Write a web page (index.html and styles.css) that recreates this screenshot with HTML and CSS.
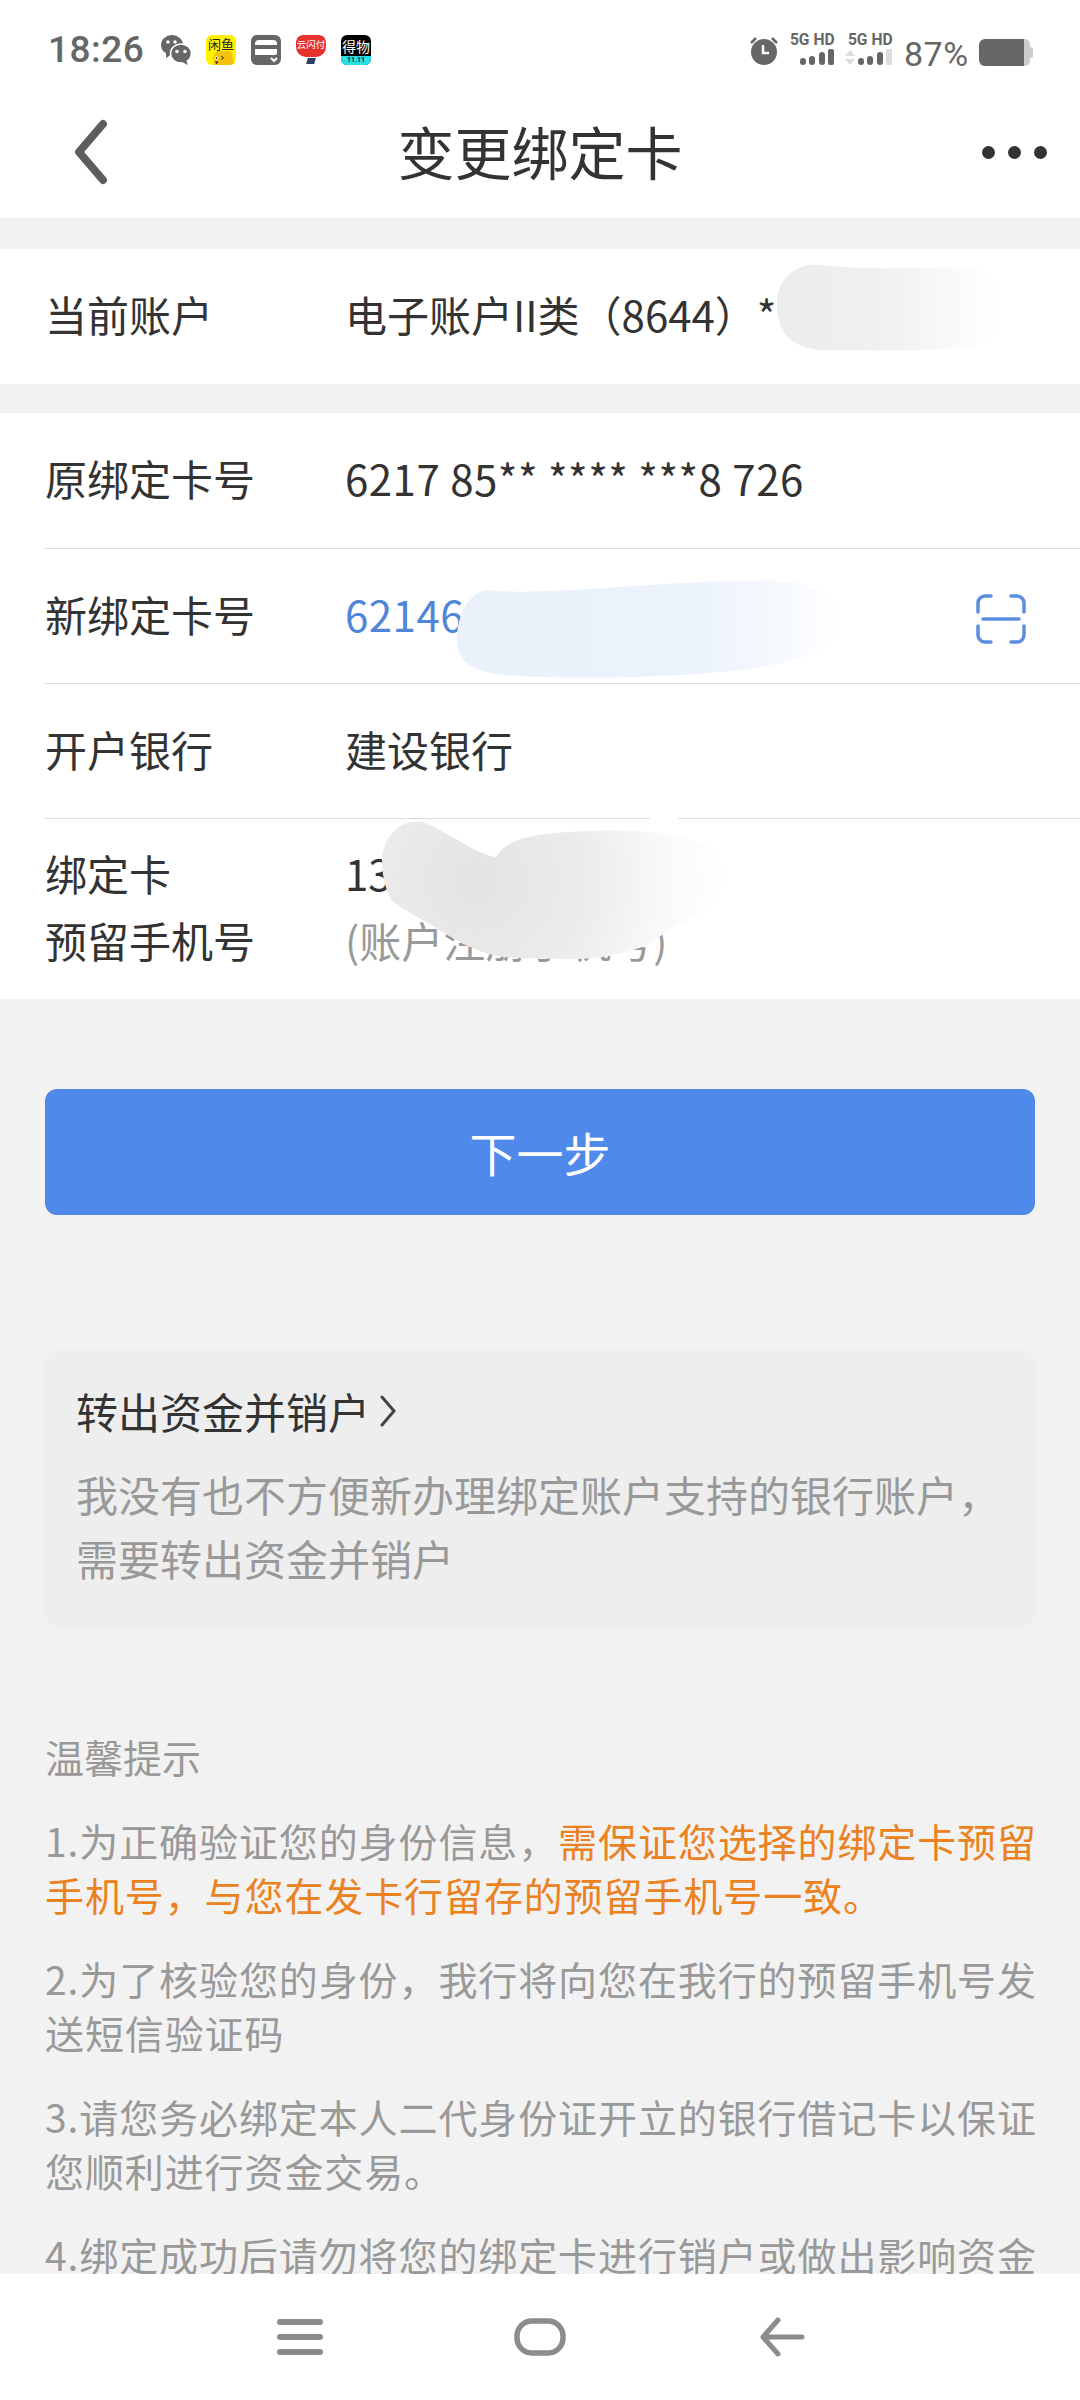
FILE: index.html
```html
<!DOCTYPE html>
<html lang="zh-CN">
<head>
<meta charset="utf-8">
<title>变更绑定卡</title>
<link rel="stylesheet" href="styles.css">
</head>
<body>
<div class="page">
  <header class="top">
    <div class="status">
      <div class="status-left">
        <span class="time">18:26</span>
        <svg class="ic wechat" viewBox="0 0 30 30"><ellipse cx="11" cy="10" rx="11" ry="10" fill="#666"/><path d="M5 17l0 6 6-4z" fill="#666"/><ellipse cx="20" cy="18.500" rx="10.500" ry="9.500" fill="#666" stroke="#fff" stroke-width="1.500"/><path d="M25 25l2 5-6-3z" fill="#666"/><circle cx="7" cy="7" r="1.800" fill="#fff"/><circle cx="14" cy="7" r="1.800" fill="#fff"/><circle cx="16" cy="16.500" r="1.800" fill="#fff"/><circle cx="24" cy="16.500" r="1.800" fill="#fff"/></svg>
        <span class="app app-yellow"><span class="app-cn">闲鱼</span><svg class="app-art" viewBox="0 0 30 16"><path d="M8 16a11 11 0 0 1 20-13l2 13z" fill="#f4c20d"/><circle cx="10" cy="8" r="2" fill="#fff"/><circle cx="10" cy="8" r="1" fill="#222"/><path d="M15 6l3 2-3 2" stroke="#222" stroke-width="1" fill="none"/><path d="M8 12h4l-2 3z" fill="#222"/></svg></span>
        <svg class="ic" viewBox="0 0 30 30"><rect width="30" height="30" rx="6" fill="#666"/><path d="M4 10v-1a4 4 0 0 1 4-4h14a4 4 0 0 1 4 4v1z" fill="#fff"/><path d="M4 14h22v4a2 2 0 0 1-2 2H4z" fill="#fff"/><path d="M20 23l3 3 3-3" fill="none" stroke="#fff" stroke-width="2"/></svg>
        <span class="app app-red"><span class="app-red-top"><span class="app-cn">云闪付</span></span><span class="app-red-mark"></span></span>
        <span class="app app-black"><span class="app-cn">得物</span><span class="app-tag">11.11</span></span>
      </div>
      <div class="status-right">
        <svg class="ic alarm" viewBox="0 0 28 30"><circle cx="14" cy="17" r="13" fill="#666"/><path d="M1 8l5-5M27 8l-5-5" stroke="#666" stroke-width="2.500"/><path d="M13 10v8h6" fill="none" stroke="#fff" stroke-width="2.500"/></svg>
        <div class="signal">
          <span class="sim-label">5G HD</span>
          <svg class="bars" viewBox="0 0 48 16"><rect x="13" y="9" width="6" height="7" rx="3" fill="#666"/><rect x="22" y="7" width="6" height="9" rx="3" fill="#666"/><rect x="32" y="3" width="6" height="13" rx="3" fill="#666"/><rect x="41" y="0" width="6" height="16" rx="2" fill="#666"/></svg>
        </div>
        <div class="signal">
          <span class="sim-label">5G HD</span>
          <svg class="bars" viewBox="0 0 48 16"><path d="M0 7l5-6 5 6zM0 10h10l-5 6z" fill="#ddd"/><rect x="13" y="9" width="6" height="7" rx="3" fill="#666"/><rect x="22" y="7" width="6" height="9" rx="3" fill="#666"/><rect x="32" y="3" width="6" height="13" rx="3" fill="#666"/><rect x="41" y="0" width="6" height="16" rx="1" fill="#ddd"/></svg>
        </div>
        <span class="battery-pct">87%</span>
        <svg class="battery" viewBox="0 0 54 27"><path d="M44 0h2a5 5 0 0 1 5 5v3a5 5 0 0 1 0 11v3a5 5 0 0 1-5 5h-2z" fill="#ccc"/><path d="M6 0h39v27H6a6 6 0 0 1-6-6V6a6 6 0 0 1 6-6z" fill="#666"/></svg>
      </div>
    </div>
    <div class="titlebar">
      <svg class="back" viewBox="0 0 34 66"><path d="M29 5L5 33l24 28" fill="none" stroke="#5d5d5d" stroke-width="8" stroke-linecap="round" stroke-linejoin="round"/></svg>
      <h1 class="title">变更绑定卡</h1>
      <div class="more"><i></i><i></i><i></i></div>
    </div>
  </header>

  <main class="content">
    <section class="group">
      <div class="row">
        <span class="label">当前账户</span>
        <span class="value">电子账户II类（8644）*</span>
        <svg class="mask mask-account" viewBox="0 0 230 90"><defs><linearGradient id="g1"><stop offset="0" stop-color="#ececec"/><stop offset=".45" stop-color="#f0f0f0"/><stop offset=".85" stop-color="#fbfbfb"/><stop offset="1" stop-color="#fff"/></linearGradient></defs><path d="M2 45C0 15 25 0 45 3c50 6 120 0 160 5 25 10 25 60 10 72-50 12-120 8-170 8C15 85 3 70 2 45z" fill="url(#g1)"/></svg>
      </div>
    </section>

    <section class="group">
      <div class="row">
        <span class="label">原绑定卡号</span>
        <span class="value value-num">6217 85** **** ***8 726</span>
      </div>
      <div class="row">
        <span class="label">新绑定卡号</span>
        <span class="value value-num value-link">62146</span>
        <svg class="scan" viewBox="0 0 50 50"><path d="M2 18V9a7 7 0 0 1 7-7h6M35 2h6a7 7 0 0 1 7 7v9M2 32v9a7 7 0 0 0 7 7h6M35 48h6a7 7 0 0 0 7-7v-9M7 25h36" fill="none" stroke="#5b8de0" stroke-width="3.500" stroke-linecap="round"/></svg>
        <svg class="mask mask-card" viewBox="0 0 385 97"><defs><linearGradient id="g2"><stop offset="0" stop-color="#eaf1fa"/><stop offset=".6" stop-color="#ebf2fb"/><stop offset=".9" stop-color="#f9fbfe"/><stop offset="1" stop-color="#fff"/></linearGradient></defs><path d="M2 55C4 25 20 5 40 10c70 4 180-12 280-10 40 2 65 10 65 40 0 30-40 40-90 48-70 8-150 10-205 8C30 95 0 90 2 55z" fill="url(#g2)"/></svg>
      </div>
      <div class="row">
        <span class="label">开户银行</span>
        <span class="value">建设银行</span>
      </div>
      <div class="row row-phone">
        <span class="label label-stack">绑定卡<br>预留手机号</span>
        <span class="value value-stack">13<br><span class="hint">(账户注册手机号)</span></span>
        <svg class="mask mask-phone" viewBox="0 0 350 140"><defs><radialGradient id="g3" gradientUnits="userSpaceOnUse" cx="95" cy="62" r="250"><stop offset="0" stop-color="#e3e3e3"/><stop offset=".45" stop-color="#ececec"/><stop offset=".75" stop-color="#f9f9f9"/><stop offset="1" stop-color="#fff"/></radialGradient></defs><rect x="268" y="-3" width="28" height="6" fill="#fff"/><path d="M0 42C0 15 25-6 48 6c25 12 48 30 66 32 12-22 50-24 92-26 50-2 130 0 140 40C351 87 296 102 272 122C250 135 215 140 190 140C150 140 125 140 107 135C85 128 75 122 59 112C40 100 20 90 10 82C3 70 0 55 0 42Z" fill="url(#g3)"/></svg>
      </div>
    </section>

    <button class="next" type="button">下一步</button>

    <section class="close-card">
      <div class="close-title">转出资金并销户<svg class="close-arrow" viewBox="0 0 16 32"><path d="M2 2l12 14L2 30" fill="none" stroke="#444" stroke-width="3" stroke-linecap="round"/></svg></div>
      <p class="close-desc">我没有也不方便新办理绑定账户支持的银行账户，<br>需要转出资金并销户</p>
    </section>

    <section class="tips">
      <h2 class="tips-title">温馨提示</h2>
      <p>1.为正确验证您的身份信息，<em>需保证您选择的绑定卡预留手机号，与您在发卡行留存的预留手机号一致。</em></p>
      <p>2.为了核验您的身份，我行将向您在我行的预留手机号发送短信验证码</p>
      <p>3.请您务必绑定本人二代身份证开立的银行借记卡以保证您顺利进行资金交易。</p>
      <p>4.绑定成功后请勿将您的绑定卡进行销户或做出影响资金</p>
    </section>
  </main>

  <nav class="navbar">
    <svg class="nav-menu" viewBox="0 0 46 36"><path d="M3 3h40M3 18h40M3 33h40" stroke="#8c8c8c" stroke-width="6" stroke-linecap="round"/></svg>
    <svg class="nav-home" viewBox="0 0 52 38"><rect x="3" y="3" width="46" height="32" rx="15" fill="none" stroke="#8c8c8c" stroke-width="5.500"/></svg>
    <svg class="nav-back" viewBox="0 0 46 40"><path d="M19 3L4 20l15 17M4 20h39" fill="none" stroke="#8c8c8c" stroke-width="5" stroke-linecap="round" stroke-linejoin="round"/></svg>
  </nav>
</div>
</body>
</html>
```

FILE: styles.css
```css
* { box-sizing: border-box; }
html, body { margin: 0; padding: 0; }
body { background: #f2f2f2; font-family: "Noto Sans CJK SC", "Noto Sans", sans-serif; color: #333; }

.page { width: 1080px; height: 2400px; display: flex; flex-direction: column; overflow: hidden; }

.top { height: 219px; flex: none; background: #fff; border-bottom: 1px solid #ececec; display: flex; flex-direction: column; }
.status { height: 100px; flex: none; padding: 34px 47px 0 48px; display: flex; justify-content: space-between; align-items: flex-start; }
.status-left { display: flex; align-items: center; height: 32px; }
.status-right { display: flex; align-items: center; height: 32px; }
.time { font-family: Roboto, sans-serif; font-weight: 500; font-size: 37px; line-height: 32px; color: #666; width: 113px; letter-spacing: .5px; }
.ic { width: 30px; height: 30px; flex: none; margin-right: 15px; }
.wechat { margin-right: 15px; }
.app { width: 30px; height: 30px; flex: none; margin-right: 15px; border-radius: 6px; display: flex; flex-direction: column; align-items: center; overflow: hidden; position: relative; }
.app:last-child { margin-right: 0; }
.app-cn { font-size: 13px; line-height: 15px; white-space: nowrap; }
.app-yellow { background: #fff200; color: #222; padding-top: 1px; }
.app-art { width: 30px; height: 14px; }
.app-red { background: transparent; }
.app-red-top { width: 30px; height: 22px; background: #e5322d; border-radius: 7px 7px 10px 10px; color: #fff; display: flex; justify-content: center; padding-top: 2px; }
.app-red-top .app-cn { font-size: 9.500px; }
.app-red-mark { width: 8px; height: 6px; margin-top: 1px; background: #2c3e63; transform: skewX(-15deg); }
.app-black { background: #000; color: #fff; padding-top: 2px; }
.app-black .app-cn { font-size: 14px; line-height: 18px; }
.app-tag { position: absolute; left: 0; right: 0; bottom: 0; height: 9px; background: #2adfe6; color: #123; font-size: 7px; line-height: 9px; text-align: center; font-family: Roboto, sans-serif; font-weight: 700; }

.alarm { width: 28px; margin-right: 9px; }
.signal { width: 48px; margin-right: 10px; display: flex; flex-direction: column; align-items: flex-end; }
.sim-label { font-family: Roboto, sans-serif; font-weight: 700; font-size: 17px; line-height: 15px; color: #666; white-space: nowrap; transform: scaleX(.92); transform-origin: right; margin-top: -3px; }
.bars { width: 48px; height: 16px; margin-top: 2px; flex: none; }
.battery-pct { font-family: Roboto, sans-serif; font-size: 34px; line-height: 32px; color: #666; width: 75px; margin-left: 1px; margin-top: 7px; letter-spacing: .5px; }
.battery { width: 54px; height: 27px; flex: none; margin-top: 4px; }

.titlebar { flex: 1; position: relative; display: flex; align-items: center; justify-content: space-between; padding: 0 33px 14px 74px; }
.back { width: 34px; height: 66px; flex: none; }
.title { position: absolute; left: 0; right: 0; top: 11px; margin: 0; text-align: center; font-size: 57px; line-height: 78px; font-weight: 400; color: #333; }
.more { display: flex; gap: 13px; }
.more i { display: block; width: 13px; height: 13px; border-radius: 50%; background: #333; }

.content { flex: 1; min-height: 0; overflow: hidden; padding-top: 30px; }

.group { background: #fff; padding-left: 45px; margin-bottom: 29px; }
.row { position: relative; height: 135px; display: flex; align-items: center; padding-bottom: 6px; border-top: 1px solid #dedede; }
.group > .row:first-child { border-top: 0; }
.label { width: 300px; flex: none; font-size: 42px; line-height: 67px; color: #333; }
.value { font-size: 42px; line-height: 67px; color: #333; white-space: nowrap; }
.value-num { letter-spacing: .5px; }
.value-link { color: #4f86d9; }
.label-stack, .value-stack { white-space: nowrap; }
.row-phone { height: 181px; }
.hint { color: #999; }
.scan { position: absolute; right: 54px; top: 45px; width: 50px; height: 50px; }

.mask { position: absolute; overflow: visible; }
.mask-account { left: 730px; top: 13px; width: 230px; height: 90px; }
.mask-card { left: 410px; top: 32px; width: 385px; height: 97px; }
.mask-phone { left: 337px; top: 0; width: 350px; height: 140px; }

.next { display: block; width: 990px; height: 126px; margin: 90px 45px 0; padding: 0; border: 0; border-radius: 12px; background: #4f8aeb; color: #fff; font: 400 47px/122px "Noto Sans CJK SC", sans-serif; }

.close-card { margin: 135px 45px 0; height: 277px; padding: 29px 31px 0; background: #eeeeee; border-radius: 14px; }
.close-title { display: flex; align-items: center; font-size: 42px; line-height: 64px; color: #333; }
.close-arrow { width: 16px; height: 32px; margin-left: 10px; }
.close-desc { margin: 19px 0 0; font-size: 42px; line-height: 64px; color: #999; white-space: nowrap; }

.tips { margin: 0 45px; padding-top: 102px; color: #999; font-size: 39px; line-height: 54.500px; letter-spacing: .9px; }
.tips-title { margin: 0 0 29px; font-size: 39px; line-height: 54.500px; font-weight: 400; letter-spacing: 0; }
.tips p { margin: 0 -6px 29px 0; }
.tips em { font-style: normal; color: #ec8120; }

.navbar { height: 126px; flex: none; background: #fff; position: relative; display: flex; }
.nav-menu { position: absolute; left: 277px; top: 45px; width: 46px; height: 36px; }
.nav-home { position: absolute; left: 514px; top: 44px; width: 52px; height: 38px; }
.nav-back { position: absolute; left: 759px; top: 43px; width: 46px; height: 40px; }
```
